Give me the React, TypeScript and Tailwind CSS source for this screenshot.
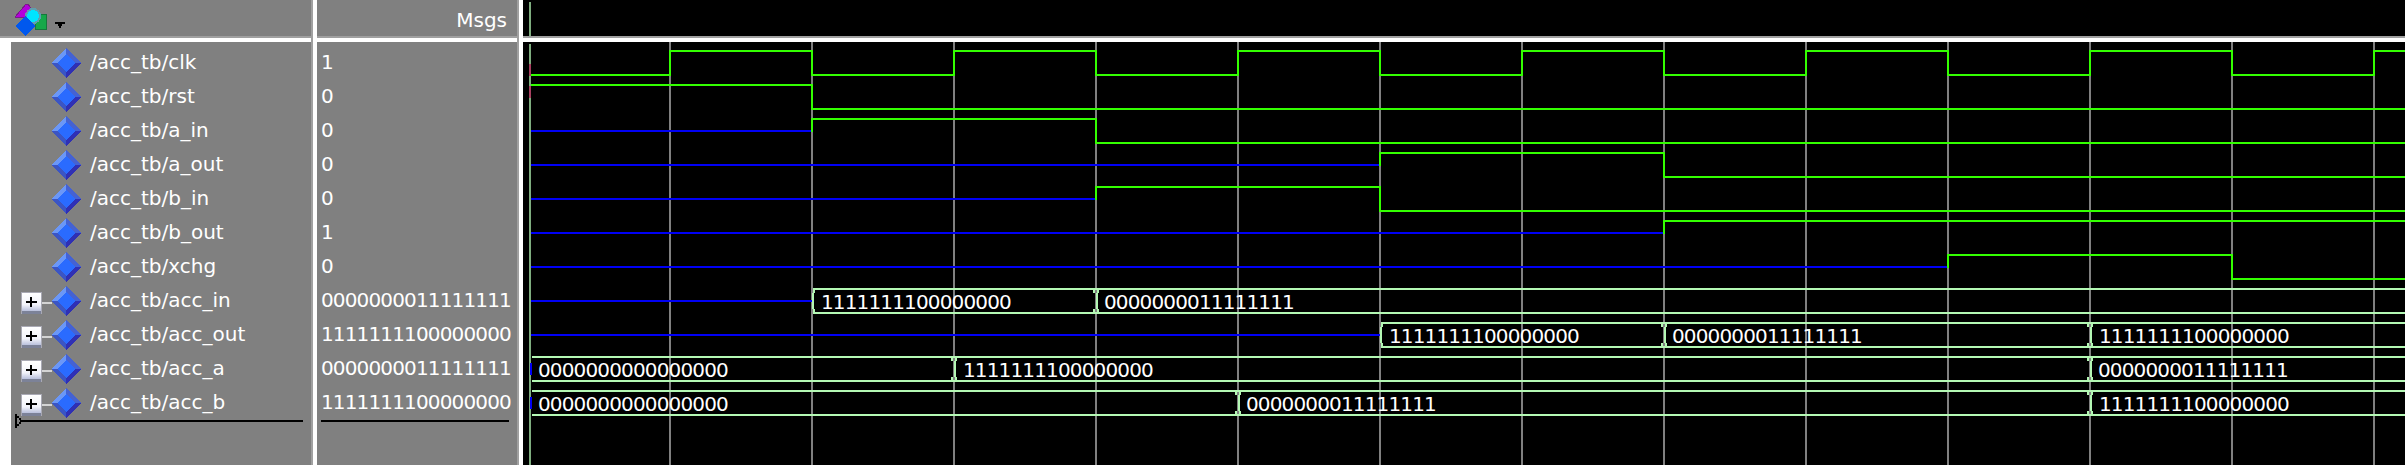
const FONT = "font-['DejaVu_Sans',Verdana,sans-serif]";

const GRID = Array.from({ length: 13 }, (_, i) => 670 + 142 * i);
const START = 531;
const END = 2405;

const rowMid = (row: number) => 63 + 34 * row;

type State = "z" | 0 | 1;

const wires: { row: number; first: State; edges: [number, State][] }[] = [
  {
    row: 0,
    first: 0,
    edges: GRID.map((x, i) => [x, i % 2 === 0 ? 1 : 0] as [number, State]),
  },
  { row: 1, first: 1, edges: [[812, 0]] },
  { row: 2, first: "z", edges: [[812, 1], [1096, 0]] },
  { row: 3, first: "z", edges: [[1380, 1], [1664, 0]] },
  { row: 4, first: "z", edges: [[1096, 1], [1380, 0]] },
  { row: 5, first: "z", edges: [[1664, 1]] },
  { row: 6, first: "z", edges: [[1948, 1], [2232, 0]] },
];

const HI = "1111111100000000";
const LO = "0000000011111111";
const ZERO = "0000000000000000";

const buses: { row: number; parts: [number, string][] }[] = [
  { row: 7, parts: [[812, HI], [1096, LO]] },
  { row: 8, parts: [[1380, HI], [1664, LO], [2090, HI]] },
  { row: 9, parts: [[START, ZERO], [954, HI], [2090, LO]] },
  { row: 10, parts: [[START, ZERO], [1238, LO], [2090, HI]] },
];

const signals = [
  { name: "/acc_tb/clk", value: "1" },
  { name: "/acc_tb/rst", value: "0" },
  { name: "/acc_tb/a_in", value: "0" },
  { name: "/acc_tb/a_out", value: "0" },
  { name: "/acc_tb/b_in", value: "0" },
  { name: "/acc_tb/b_out", value: "1" },
  { name: "/acc_tb/xchg", value: "0" },
  { name: "/acc_tb/acc_in", value: LO, bus: true },
  { name: "/acc_tb/acc_out", value: HI, bus: true },
  { name: "/acc_tb/acc_a", value: LO, bus: true },
  { name: "/acc_tb/acc_b", value: HI, bus: true },
];

function Diamond() {
  return (
    <svg width="30" height="30" viewBox="0 0 30 30" shapeRendering="crispEdges" className="shrink-0">
      <polygon points="0,15 15,0 15,6 6,15" fill="#6b97f7" />
      <polygon points="15,0 30,15 24,15 15,6" fill="#4562d2" />
      <polygon points="30,15 15,30 15,24 24,15" fill="#3030b4" />
      <polygon points="0,15 15,30 15,24 6,15" fill="#3b55c4" />
      <polygon points="15,6 24,15 15,24 6,15" fill="#2a6bff" />
    </svg>
  );
}

function Expander() {
  return (
    <div className="flex w-[31px] shrink-0 items-center pt-[3px]">
      <svg width="21" height="22" viewBox="0 0 21 22" shapeRendering="crispEdges" className="shrink-0">
        <defs>
          <linearGradient id="exp" x1="0" y1="0" x2="0" y2="1">
            <stop offset="0" stopColor="#ffffff" />
            <stop offset="0.65" stopColor="#f2f3fa" />
            <stop offset="1" stopColor="#b9c0dc" />
          </linearGradient>
        </defs>
        <rect x="0" y="0" width="21" height="22" fill="#a9a9b4" />
        <rect x="1" y="1" width="19" height="18" fill="url(#exp)" />
        <rect x="1" y="19" width="19" height="3" fill="#7c8298" />
        <rect x="5" y="9" width="11" height="2" fill="#000000" />
        <rect x="9" y="5" width="2" height="10" fill="#000000" />
      </svg>
      <div className="h-[2px] w-[10px] bg-[#d4d4d4]" />
    </div>
  );
}

function StackIcon() {
  return (
    <svg width="33" height="33" viewBox="0 0 33 33" shapeRendering="crispEdges">
      <polygon points="0,14 11,1 13,1 21,13 21,14" fill="#b400dc" stroke="#7a1a8a" />
      <rect x="20.5" y="11.5" width="11" height="15" fill="#16a84a" stroke="#15783c" />
      <circle cx="18" cy="13" r="8" fill="#5f9fb0" />
      <circle cx="18" cy="13" r="6" fill="#00e5ff" />
      <polygon points="10,13 20,23 10,33 0,23" fill="#0058ee" />
    </svg>
  );
}

function Separator() {
  return (
    <div className="flex shrink-0">
      <div className="w-[2px] bg-[#a0a0a0]" />
      <div className="w-[4px] bg-white" />
    </div>
  );
}

function HeaderRule() {
  return (
    <>
      <div className="h-[2px] bg-[#a0a0a0]" />
      <div className="h-[4px] bg-white" />
    </>
  );
}

function NamesColumn() {
  return (
    <div className="flex w-[311px] shrink-0 flex-col">
      <div className="flex h-[36px] items-start bg-[#808080] pl-[15px] pt-[3px]">
        <StackIcon />
        <svg width="10" height="6" viewBox="0 0 10 6" shapeRendering="crispEdges" className="ml-[7px] mt-[19px]">
          <polygon points="0,0 10,0 10,2 7,2 7,4 6,4 6,6 4,6 4,4 3,4 3,2 0,2" fill="#000" />
        </svg>
      </div>
      <HeaderRule />
      <div className="flex flex-1">
        <div className="w-[11px] bg-white" />
        <div className="relative flex-1 bg-[#808080] pl-[10px] pt-[4px]">
          {signals.map((s) => (
            <div key={s.name} className="flex h-[34px] items-center">
              {s.bus ? <Expander /> : <div className="w-[31px] shrink-0" />}
              <div className="-ml-px">
                <Diamond />
              </div>
              <span className={`ml-[9px] pb-[2px] text-[20px] leading-none text-white ${FONT}`}>{s.name}</span>
            </div>
          ))}
          <div className="h-[2px] w-[282px] bg-black" />
          <svg width="7" height="14" viewBox="0 0 7 14" shapeRendering="crispEdges" className="absolute left-[4px] top-[372px]">
            <polygon points="0,0 2,0 2,2 4,2 4,4 6,4 6,6 7,6 7,8 6,8 6,10 4,10 4,12 2,12 2,14 0,14" fill="#000" />
            <polygon points="2,4 4,4 4,6 5,6 5,8 4,8 4,10 2,10" fill="#808080" />
          </svg>
        </div>
      </div>
    </div>
  );
}

function ValuesColumn() {
  return (
    <div className="flex w-[200px] shrink-0 flex-col">
      <div className={`flex h-[36px] items-start justify-end bg-[#808080] pr-[10px] pt-[8px] text-[20px] leading-[24px] text-white ${FONT}`}>
        Msgs
      </div>
      <HeaderRule />
      <div className={`flex-1 bg-[#808080] pl-[4px] pt-[4px] text-white ${FONT}`}>
        {signals.map((s) => (
          <div key={s.name} className="flex h-[34px] items-center pb-[2px] text-[20px] leading-none tracking-[-0.85px]">
            {s.value}
          </div>
        ))}
        <div className="h-[2px] w-[188px] bg-black" />
      </div>
    </div>
  );
}

function Wave() {
  const green = "#33ff00";
  const pale = "#b4f8b4";
  const blue = "#0000f5";
  return (
    <svg
      viewBox={`523 42 ${END - 523} 423`}
      width={END - 523}
      height="423"
      shapeRendering="crispEdges"
      className="block"
    >
      {GRID.map((x) => (
        <rect key={x} x={x - 1} y="42" width="2" height="423" fill="#808080" />
      ))}
      <rect x="529" y="44" width="2" height="421" fill="#7fae7f" />
      <rect x="529" y="64" width="2" height="12" fill="#a84060" />
      <rect x="529" y="86" width="2" height="12" fill="#a84060" />

      {wires.map((w) => {
        const mid = rowMid(w.row);
        const yOf = (s: State) => (s === "z" ? mid : s === 1 ? mid - 12 : mid + 12);
        const stops: [number, State][] = [[START, w.first], ...w.edges];
        return stops.map(([x, s], i) => {
          const next = stops[i + 1];
          const x2 = next ? next[0] : END;
          return (
            <g key={`${w.row}-${x}`}>
              <rect x={x} y={yOf(s) - 1} width={x2 - x} height="2" fill={s === "z" ? blue : green} />
              {next && (
                <rect
                  x={x2 - 1}
                  y={Math.min(yOf(s), yOf(next[1])) - 1}
                  width="2"
                  height={Math.abs(yOf(s) - yOf(next[1])) + 2}
                  fill={green}
                />
              )}
            </g>
          );
        });
      })}

      {buses.map((b) => {
        const mid = rowMid(b.row);
        const top = mid - 12;
        const bottom = mid + 12;
        const firstX = b.parts[0][0];
        return (
          <g key={b.row}>
            {firstX === START ? (
              <rect x="530" y={mid - 6} width="2" height="12" fill={blue} />
            ) : (
              <rect x={START} y={mid - 1} width={firstX - START} height="2" fill={blue} />
            )}
            <rect x={firstX + 1} y={top - 1} width={END - firstX} height="2" fill={pale} />
            <rect x={firstX + 1} y={bottom - 1} width={END - firstX} height="2" fill={pale} />
            {b.parts.map(([x, text]) => (
              <g key={x}>
                {x !== START && (
                  <>
                    <rect x={x} y={top + 4} width="2" height="16" fill={pale} />
                    <rect x={x + 1} y={top - 1} width="2" height="5" fill={pale} />
                    <rect x={x + 1} y={bottom - 4} width="2" height="5" fill={pale} />
                    {x !== firstX && (
                      <>
                        <rect x={x - 3} y={top - 1} width="2" height="5" fill={pale} />
                        <rect x={x - 3} y={bottom - 4} width="2" height="5" fill={pale} />
                      </>
                    )}
                  </>
                )}
                <text
                  x={x === START ? 538 : x + (text === HI ? 9 : 8)}
                  y={mid + 8}
                  fill="#ffffff"
                  shapeRendering="auto"
                  className={`text-[20px] tracking-[-0.85px] ${FONT}`}
                >
                  {text}
                </text>
              </g>
            ))}
          </g>
        );
      })}
    </svg>
  );
}

function WaveColumn() {
  return (
    <div className="flex flex-1 flex-col bg-black">
      <div className="h-[36px] pl-[6px] pt-[2px]">
        <div className="h-[34px] w-[2px] bg-[#7fae7f]" />
      </div>
      <HeaderRule />
      <Wave />
    </div>
  );
}

export default function App() {
  return (
    <div className="flex h-[465px] w-[2405px] overflow-hidden bg-black">
      <NamesColumn />
      <Separator />
      <ValuesColumn />
      <Separator />
      <WaveColumn />
    </div>
  );
}
